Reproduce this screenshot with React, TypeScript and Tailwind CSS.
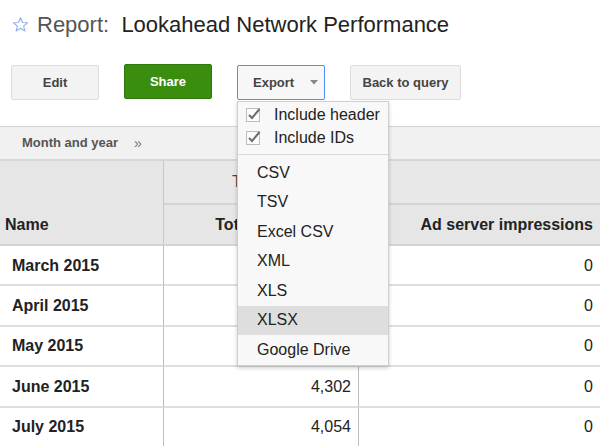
import React from "react";

const font = { fontFamily: '"Liberation Sans", Arial, sans-serif' };

function Check() {
  return (
    <svg width="16" height="15" viewBox="0 0 16 15" className="shrink-0">
      <rect x="0.5" y="1.5" width="13" height="13" fill="#fbfbfb" stroke="#bdbdbd" />
      <path d="M3 8 L6 11 L13.5 2" fill="none" stroke="#6d6d6d" strokeWidth="2" />
    </svg>
  );
}

const rows = [
  ["March 2015", "", "0"],
  ["April 2015", "", "0"],
  ["May 2015", "", "0"],
  ["June 2015", "4,302", "0"],
  ["July 2015", "4,054", "0"],
];

export default function App() {
  return (
    <div className="relative w-[600px] h-[446px] overflow-hidden bg-white text-[#222]" style={font}>
      {/* Title */}
      <div className="flex items-center h-[48px] pl-[12px]">
        <svg width="17" height="17" viewBox="0 0 24 24" className="shrink-0">
          <path
            d="M12 2.5 L14.8 9.1 L21.9 9.6 L16.5 14.2 L18.2 21.2 L12 17.4 L5.8 21.2 L7.5 14.2 L2.1 9.6 L9.2 9.1 Z"
            fill="none"
            stroke="#8fb3ee"
            strokeWidth="1.6"
            strokeLinejoin="round"
          />
        </svg>
        <span className="ml-[8px] text-[22px] text-[#555] whitespace-pre">Report:  </span>
        <span className="text-[22px] text-[#222]">Lookahead Network Performance</span>
      </div>

      {/* Buttons */}
      <div className="flex mt-[17px] pl-[11px] gap-[25px] h-[35px]">
        <div className="w-[88px] h-[35px] flex items-center justify-center rounded-[2px] border border-[#dcdcdc] bg-[#f3f3f3] text-[13px] font-bold text-[#444]">
          Edit
        </div>
        <div className="w-[88px] h-[35px] -mt-[1px] flex items-center justify-center rounded-[2px] border border-[#2d7a0a] bg-[#3b8d10] text-[13px] font-bold text-white">
          Share
        </div>
        <div className="w-[88px] h-[35px] flex items-center pl-[15px] rounded-[2px] border border-[#4d90fe] bg-[#f7f7f7] text-[13px] font-bold text-[#444]">
          <span>Export</span>
          <svg width="8" height="5" viewBox="0 0 8 5" className="ml-[16px]">
            <path d="M0 0 L8 0 L4 4.5 Z" fill="#888" />
          </svg>
        </div>
        <div className="w-[111px] h-[35px] flex items-center justify-center rounded-[2px] border border-[#dcdcdc] bg-[#f3f3f3] text-[13px] font-bold text-[#444]">
          Back to query
        </div>
      </div>

      {/* Breadcrumb bar */}
      <div className="mt-[26px] h-[35px] flex items-center pl-[22px] bg-[#f1f1f1] border-t border-b-2 border-[#d6d6d6] text-[13px] font-bold text-[#555]">
        <span>Month and year</span>
        <span className="ml-[16px] font-normal text-[#777] text-[14px]">»</span>
      </div>

      {/* Table */}
      <div className="grid grid-cols-[164px_195px_1fr] text-[16px]">
        <div className="row-span-2 bg-[#e6e6e6] border-r border-[#c8c8c8] border-b-2 border-b-[#d4d4d4] flex items-end pb-[7px] pl-[5px] font-bold text-[#222]">
          Name
        </div>
        <div className="col-span-2 h-[44px] bg-[#e8e8e8] border-b-2 border-[#d4d4d4] flex items-center pl-[68px] text-[#444]">
          Totals
        </div>
        <div className="h-[41px] bg-[#e6e6e6] border-r border-[#d0d0d0] border-b-2 border-[#d4d4d4] flex items-center justify-end pr-[7px] pt-[1px] font-bold text-[#222]">
          Total impressions
        </div>
        <div className="h-[41px] bg-[#e6e6e6] border-b-2 border-[#d4d4d4] flex items-center justify-end pr-[7px] pt-[1px] font-bold text-[#222]">
          Ad server impressions
        </div>
        {rows.map((r) => (
          <React.Fragment key={r[0]}>
            <div className="h-[40.4px] border-r border-[#bdbdbd] border-b-2 border-b-[#dedede] flex items-center pl-[12px] pt-[1px] font-bold text-[#222]">
              {r[0]}
            </div>
            <div className="h-[40.4px] border-r border-[#bdbdbd] border-b-2 border-b-[#dedede] flex items-center justify-end pr-[7px] pt-[1px] text-[#222]">
              {r[1]}
            </div>
            <div className="h-[40.4px] border-b-2 border-[#dedede] flex items-center justify-end pr-[7px] pt-[1px] text-[#222]">
              {r[2]}
            </div>
          </React.Fragment>
        ))}
      </div>

      {/* Dropdown menu */}
      <div className="absolute left-[237px] top-[101px] w-[152px] bg-[#f8f8f8] border border-[#cfcfcf] shadow-[0_2px_4px_rgba(0,0,0,0.2)] text-[16px] text-[#222]">
        <div className="pt-[1px]">
          <div className="h-[23px] flex items-center pl-[8px] gap-[12px]">
            <Check />
            <span>Include header</span>
          </div>
          <div className="h-[23px] flex items-center pl-[8px] gap-[12px]">
            <Check />
            <span>Include IDs</span>
          </div>
        </div>
        <div className="mt-[5px] mb-[3px] h-px bg-[#d9d9d9]" />
        {["CSV", "TSV", "Excel CSV", "XML", "XLS", "XLSX", "Google Drive"].map((t) => (
          <div
            key={t}
            className={
              "h-[29.5px] flex items-center pl-[19px] " + (t === "XLSX" ? "bg-[#dedede]" : "")
            }
          >
            {t}
          </div>
        ))}
      </div>
    </div>
  );
}
